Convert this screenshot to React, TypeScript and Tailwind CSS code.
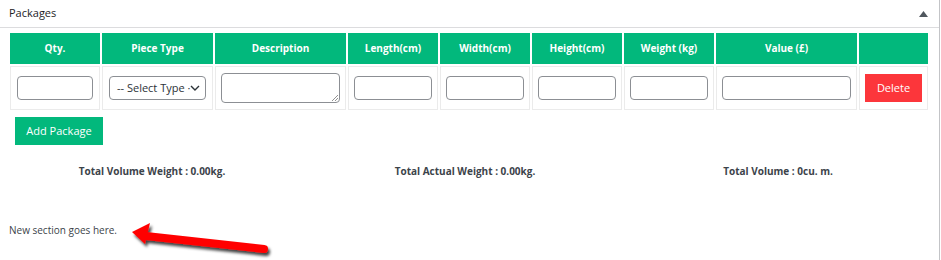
import React from "react";

const cols = [
  "Qty.",
  "Piece Type",
  "Description",
  "Length(cm)",
  "Width(cm)",
  "Height(cm)",
  "Weight (kg)",
  "Value (£)",
  "",
];

function TextInput() {
  return (
    <div className="h-[24px] w-full rounded-[4px] border border-[#8c8f94] bg-white" />
  );
}

export default function App() {
  return (
    <div
      className="relative h-[260px] w-[941px] bg-white text-[#1d2327]"
      style={{ fontFamily: '"Open Sans", "Noto Sans", sans-serif' }}
    >
      <div className="h-[260px] w-[940px] border-r border-[#c3c4c7]">
        <div className="flex h-[28px] items-center justify-between border-b border-[#dcdcde] pl-[9px] pr-[11px]">
          <span className="text-[11px] text-[#1d2327]">Packages</span>
          <svg width="9" height="6" viewBox="0 0 9 6" className="mt-[1px]">
            <polygon points="4.5,0 9,6 0,6" fill="#50575e" />
          </svg>
        </div>
        <div className="pl-[10px] pt-[5px]">
          <div className="grid grid-cols-[90px_111px_131px_90px_90px_90px_90px_141px_69px] gap-[2px]">
            {cols.map((c, i) => (
              <div
                key={i}
                className="flex h-[31px] items-center justify-center bg-[#02b87c] text-[10px] font-bold text-white"
              >
                {c}
              </div>
            ))}
            <div className="flex h-[44px] items-center border border-[#ebebeb] px-[6px]">
              <TextInput />
            </div>
            <div className="flex h-[44px] items-center border border-[#ebebeb] px-[6px]">
              <div className="flex h-[24px] w-full items-center justify-between overflow-hidden rounded-[4px] border border-[#8c8f94] bg-white pl-[7px] pr-[5px]">
                <span className="whitespace-nowrap text-[11px] text-[#2c3338]">-- Select Type ·</span>
                <svg width="10" height="6" viewBox="0 0 10 6" className="shrink-0">
                  <polyline points="1,1 5,5 9,1" fill="none" stroke="#2c3338" strokeWidth="1.4" />
                </svg>
              </div>
            </div>
            <div className="flex h-[44px] items-center border border-[#ebebeb] px-[5px]">
              <div className="relative h-[30px] w-full rounded-[4px] border border-[#8c8f94] bg-white">
                <svg width="7" height="7" viewBox="0 0 7 7" className="absolute bottom-[1px] right-[1px]">
                  <line x1="1" y1="7" x2="7" y2="1" stroke="#777" strokeWidth="0.8" />
                  <line x1="4" y1="7" x2="7" y2="4" stroke="#777" strokeWidth="0.8" />
                </svg>
              </div>
            </div>
            <div className="flex h-[44px] items-center border border-[#ebebeb] px-[5px]">
              <TextInput />
            </div>
            <div className="flex h-[44px] items-center border border-[#ebebeb] px-[5px]">
              <TextInput />
            </div>
            <div className="flex h-[44px] items-center border border-[#ebebeb] px-[5px]">
              <TextInput />
            </div>
            <div className="flex h-[44px] items-center border border-[#ebebeb] px-[5px]">
              <TextInput />
            </div>
            <div className="flex h-[44px] items-center border border-[#ebebeb] px-[5px]">
              <TextInput />
            </div>
            <div className="flex h-[44px] items-center border border-[#ebebeb] px-[5px]">
              <div className="flex h-[28px] w-full items-center justify-center bg-[#fc363b] text-[11px] text-white">
                Delete
              </div>
            </div>
          </div>
          <div className="ml-[5px] mt-[7px] flex h-[28px] w-[88px] items-center justify-center bg-[#02b87c] text-[11px] text-white">
            Add Package
          </div>
        </div>
        <div className="mt-[19px] grid grid-cols-[304px_322px_304px] text-[10px] font-bold text-[#3c434a]">
          <div className="text-center">Total Volume Weight : 0.00kg.</div>
          <div className="text-center">Total Actual Weight : 0.00kg.</div>
          <div className="text-center">Total Volume : 0cu. m.</div>
        </div>
        <div className="ml-[9px] mt-[44px] text-[10px] text-[#3c434a]">New section goes here.</div>
      </div>
      <svg
        className="absolute left-[120px] top-[215px]"
        width="160"
        height="45"
        viewBox="120 215 160 45"
      >
        <defs>
          <filter id="arrowShadow" x="-20%" y="-50%" width="140%" height="200%">
            <feDropShadow dx="2" dy="3" stdDeviation="1.5" floodColor="#000" floodOpacity="0.75" />
          </filter>
        </defs>
        <g filter="url(#arrowShadow)">
          <line x1="146" y1="236" x2="264" y2="249" stroke="#ff0000" strokeWidth="8" strokeLinecap="round" />
          <polygon points="132,232 150,223 145,244" fill="#ff0000" />
        </g>
      </svg>
    </div>
  );
}
